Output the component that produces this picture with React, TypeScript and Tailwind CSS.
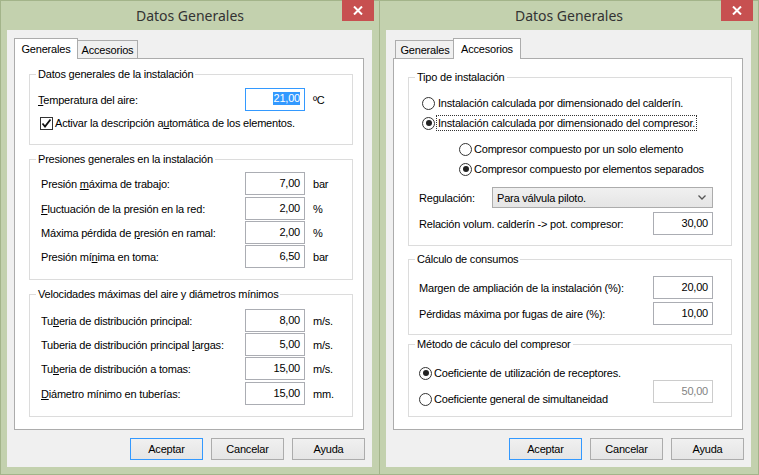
import React from 'react';

const UI = "font-['Liberation_Sans',Arial,sans-serif] text-[11px] leading-[14px] tracking-[-0.2px] text-black";

function U({ children }: { children: React.ReactNode }) {
  return <span className="underline underline-offset-[1px]">{children}</span>;
}

function Win({ children, className = '' }: { children: React.ReactNode; className?: string }) {
  return (
    <div className={`relative flex flex-col w-[380px] h-[475px] bg-[#c3d1ae] border border-[#a3b48a] ${className}`}>
      <div className="relative h-[29px] flex items-center justify-center">
        <span className="font-['Noto_Sans',sans-serif] text-[14px] tracking-normal text-[#333] mt-[1px]">Datos Generales</span>
        <div className="absolute right-[5px] top-[-1px] w-[32px] h-[21px] bg-[#c75050] flex items-center justify-center">
          <svg width="10" height="9" viewBox="0 0 10 9">
            <path d="M1 0.5 L9 8.5 M9 0.5 L1 8.5" stroke="#fff" strokeWidth="2" />
          </svg>
        </div>
      </div>
      <div className="ml-[6px] mr-[7px] h-[437px] bg-[#f0f0f0] flex flex-col">{children}</div>
    </div>
  );
}

function Tab({ label, selected, className = '' }: { label: string; selected?: boolean; className?: string }) {
  return selected ? (
    <div className={`relative z-10 h-[21px] -mb-px bg-white border border-b-0 border-[#acacac] flex justify-center pt-[3px] ${className}`}>
      {label}
    </div>
  ) : (
    <div className={`h-[18px] bg-[#f0f0f0] border border-b-0 border-[#acacac] flex justify-center pt-[2px] ${className}`}>
      {label}
    </div>
  );
}

function Group({ legend, className = '', children }: { legend: string; className?: string; children: React.ReactNode }) {
  return (
    <fieldset className={`border border-[#dcdcdc] ml-[14px] w-[324px] ${className}`}>
      <legend className="ml-[6px] px-[2px] leading-[14px]">{legend}</legend>
      {children}
    </fieldset>
  );
}

function Field({ value, focused, disabled, className = '' }: { value: string; focused?: boolean; disabled?: boolean; className?: string }) {
  return (
    <div
      className={`w-[60px] h-[23px] border bg-white flex items-center justify-end pr-[4px] pb-[2px] ${
        focused ? 'border-[#3399ff]' : disabled ? 'border-[#cccccc] text-[#838383]' : 'border-[#abadb3]'
      } ${className}`}
    >
      {focused ? <span className="bg-[#3399ff] text-white leading-[13px]">{value}</span> : value}
    </div>
  );
}

function Row({ label, value, unit, className = '' }: { label: React.ReactNode; value: string; unit: string; className?: string }) {
  return (
    <div className={`flex items-center ${className}`}>
      <span className="w-[215px] pl-[11px]">{label}</span>
      <Field value={value} />
      <span className="ml-[8px]">{unit}</span>
    </div>
  );
}

function Radio({ checked }: { checked?: boolean }) {
  return (
    <span className="w-[13px] h-[13px] rounded-full border border-[#333] bg-white flex items-center justify-center shrink-0">
      {checked && <span className="w-[6px] h-[6px] rounded-full bg-[#222]" />}
    </span>
  );
}

function Buttons() {
  return (
    <div className="flex justify-end gap-[8px] mr-[7px] mt-[8px]">
      <button className="w-[73px] h-[22px] border border-[#3399ff] bg-gradient-to-b from-[#f0f0f0] to-[#e5e5e5]">Aceptar</button>
      <button className="w-[73px] h-[22px] border border-[#acacac] bg-gradient-to-b from-[#f0f0f0] to-[#e5e5e5]">Cancelar</button>
      <button className="w-[73px] h-[22px] border border-[#acacac] bg-gradient-to-b from-[#f0f0f0] to-[#e5e5e5]">Ayuda</button>
    </div>
  );
}

function Generales() {
  return (
    <Win>
      <div className="ml-[7px] mt-[8px] flex items-end h-[20px]">
        <Tab label="Generales" selected className="w-[64px]" />
        <Tab label="Accesorios" className="w-[61px] -ml-px" />
      </div>
      <div className="ml-[7px] w-[350px] h-[372px] bg-white border border-[#acacac]">
        <Group legend="Datos generales de la instalación" className="mt-[8px] h-[78px]">
          <div className="flex items-center mt-[7px]">
            <span className="w-[215px] pl-[8px]">
              <U>T</U>emperatura del aire:
            </span>
            <Field value="21,00" focused />
            <span className="ml-[8px]">ºC</span>
          </div>
          <div className="flex items-center mt-[5px] pl-[10px]">
            <span className="w-[13px] h-[13px] border border-[#333] bg-white flex items-center justify-center">
              <svg width="11" height="11" viewBox="0 0 11 11">
                <path d="M1.5 5.5 L4 8.5 L9.5 1.5" stroke="#111" strokeWidth="1.8" fill="none" />
              </svg>
            </span>
            <span className="ml-[2px]">
              Activar la descripción a<U>u</U>tomática de los elementos.
            </span>
          </div>
        </Group>
        <Group legend="Presiones generales en la instalación" className="mt-[7px] h-[128px]">
          <Row className="mt-[6px]" label={<>Presión <U>m</U>áxima de trabajo:</>} value="7,00" unit="bar" />
          <Row className="mt-[2px]" label={<><U>F</U>luctuación de la presión en la red:</>} value="2,00" unit="%" />
          <Row className="mt-[1px]" label={<>Máxima pérdida de <U>p</U>resión en ramal:</>} value="2,00" unit="%" />
          <Row className="mt-[1px]" label={<>Presión mí<U>n</U>ima en toma:</>} value="6,50" unit="bar" />
        </Group>
        <Group legend="Velocidades máximas del aire y diámetros mínimos" className="mt-[7px] h-[130px]">
          <Row className="mt-[8px]" label={<>Tu<U>b</U>eria de distribución principal:</>} value="8,00" unit="m/s." />
          <Row className="mt-[1px]" label={<>Tuberia de distribución principal <U>l</U>argas:</>} value="5,00" unit="m/s." />
          <Row className="mt-[1px]" label={<>Tu<U>b</U>eria de distribución a tomas:</>} value="15,00" unit="m/s." />
          <Row className="mt-[2px]" label={<><U>D</U>iámetro mínimo en tuberías:</>} value="15,00" unit="mm." />
        </Group>
      </div>
      <Buttons />
    </Win>
  );
}

function Accesorios() {
  return (
    <Win className="-ml-px">
      <div className="ml-[7px] mt-[8px] flex items-end h-[20px]">
        <Tab label="Generales" className="w-[60px] ml-[2px]" />
        <Tab label="Accesorios" selected className="w-[68px] -ml-[2px]" />
      </div>
      <div className="ml-[7px] w-[350px] h-[372px] bg-white border border-[#acacac]">
        <Group legend="Tipo de instalación" className="mt-[11px] h-[176px]">
          <div className="flex items-center gap-[3px] pl-[13px] mt-[12px]">
            <Radio />
            <span>Instalación calculada por dimensionado del calderín.</span>
          </div>
          <div className="flex items-center gap-[2px] pl-[13px] mt-[6px]">
            <Radio checked />
            <span className="outline outline-1 outline-dotted outline-[#333] px-[1px]">
              Instalación calculada por dimensionado del compresor.
            </span>
          </div>
          <div className="flex items-center gap-[2px] pl-[50px] mt-[12px]">
            <Radio />
            <span>Compresor compuesto por un solo elemento</span>
          </div>
          <div className="flex items-center gap-[2px] pl-[50px] mt-[6px]">
            <Radio checked />
            <span>Compresor compuesto por elementos separados</span>
          </div>
          <div className="flex items-center mt-[11px]">
            <span className="w-[83px] pl-[10px]">Regulación:</span>
            <div className="w-[221px] h-[21px] border border-[#acacac] bg-gradient-to-b from-[#f0f0f0] to-[#e5e5e5] flex items-center justify-between pl-[4px] pr-[6px]">
              <span>Para válvula piloto.</span>
              <svg width="8" height="5" viewBox="0 0 8 5">
                <path d="M0.5 0.5 L4 4 L7.5 0.5" stroke="#555" strokeWidth="1.3" fill="none" />
              </svg>
            </div>
          </div>
          <div className="flex items-center mt-[4px]">
            <span className="w-[244px] pl-[10px]">Relación volum. calderín -&gt; pot. compresor:</span>
            <Field value="30,00" className="h-[22px]" />
          </div>
        </Group>
        <Group legend="Cálculo de consumos" className="mt-[6px] h-[83px]">
          <div className="flex items-center mt-[10px]">
            <span className="w-[244px] pl-[10px]">Margen de ampliación de la instalación (%):</span>
            <Field value="20,00" className="h-[22px]" />
          </div>
          <div className="flex items-center mt-[3px]">
            <span className="w-[244px] pl-[10px]">Pérdidas máxima por fugas de aire (%):</span>
            <Field value="10,00" className="h-[22px]" />
          </div>
        </Group>
        <Group legend="Método de cáculo del compresor" className="mt-[2px] h-[80px]">
          <div className="flex items-start mt-[15px]">
            <div className="w-[244px] pl-[10px]">
              <div className="flex items-center gap-[2px]">
                <Radio checked />
                <span>Coeficiente de utilización de receptores.</span>
              </div>
              <div className="flex items-center gap-[2px] mt-[12px]">
                <Radio />
                <span>Coeficiente general de simultaneidad</span>
              </div>
            </div>
            <Field value="50,00" disabled className="h-[22px] mt-[14px]" />
          </div>
        </Group>
      </div>
      <Buttons />
    </Win>
  );
}

export default function App() {
  return (
    <div className={`flex w-[759px] h-[475px] overflow-hidden ${UI}`}>
      <Generales />
      <Accesorios />
    </div>
  );
}
